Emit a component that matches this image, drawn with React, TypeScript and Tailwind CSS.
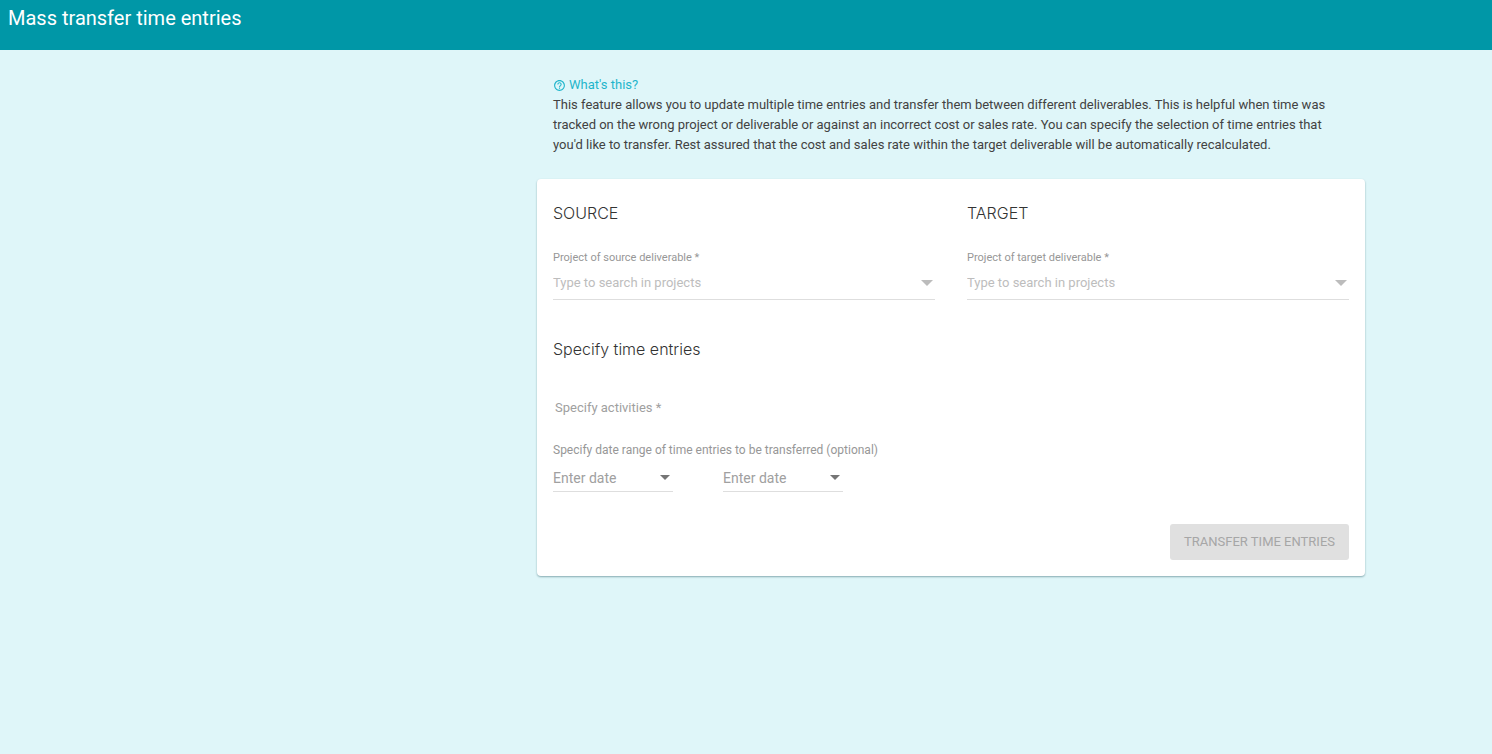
import React, { useState } from 'react';
import { MdHelpOutline } from 'react-icons/md';

interface SearchFieldProps {
  id: string;
  label: string;
}

const Arrow: React.FC<{ className: string }> = ({ className }) => (
  <svg viewBox="0 0 12 6" className={className} fill="currentColor" aria-hidden="true">
    <path d="M0 0h12L6 6z" />
  </svg>
);

const SearchField: React.FC<SearchFieldProps> = ({ id, label }) => {
  const [value, setValue] = useState('');

  return (
    <div className="flex flex-col">
      <label htmlFor={id} className="text-[11px] leading-4 text-[#979797]">
        {label}
      </label>
      <div className="flex h-[34px] items-center border-b border-[#dedede]">
        <input
          id={id}
          value={value}
          onChange={(e) => setValue(e.target.value)}
          placeholder="Type to search in projects"
          className="min-w-0 flex-1 bg-transparent text-[13px] leading-5 outline-none placeholder:text-[#bdbdbd]"
        />
        <button type="button" aria-label={`Open ${label}`} className="px-0.5 text-[#bcbcbc]">
          <Arrow className="h-1.5 w-3" />
        </button>
      </div>
    </div>
  );
};

const DateField: React.FC<{ label: string }> = ({ label }) => {
  const [value, setValue] = useState('');

  return (
    <div className="flex h-7 w-[120px] items-center border-b border-[#dedede]">
      <input
        aria-label={label}
        value={value}
        onChange={(e) => setValue(e.target.value)}
        placeholder="Enter date"
        className="min-w-0 flex-1 bg-transparent text-[14px] leading-5 outline-none placeholder:text-[#a0a0a0]"
      />
      <button type="button" aria-label={`Open ${label}`} className="px-[3px] text-[#757575]">
        <Arrow className="h-[5px] w-2.5" />
      </button>
    </div>
  );
};

const Heading: React.FC<{ children: React.ReactNode }> = ({ children }) => (
  <h2 className="font-['Inter',sans-serif] text-[16px] font-light leading-6 text-[#333]">{children}</h2>
);

export default function App() {
  return (
    <div className="min-h-screen bg-[#dff6f9] font-['Roboto',sans-serif]">
      <header className="h-[50px] bg-[#0097a7] px-2 pt-1">
        <h1 className="text-[20px] leading-7 text-white">Mass transfer time entries</h1>
      </header>

      <main className="px-4 pb-8 pt-[25px] lg:pl-[410px] lg:pr-0">
        <div className="mx-auto max-w-[828px]">
          <div className="px-4 text-[13px] leading-5 text-[#424242]">
            <a href="#help" className="flex items-center gap-[3px] text-[#1fb5cb]">
              <MdHelpOutline size={13} />
              What's this?
            </a>
            <p>
              This feature allows you to update multiple time entries and transfer them between different
              deliverables. This is helpful when time was tracked on the wrong project or deliverable or against an
              incorrect cost or sales rate. You can specify the selection of time entries that you'd like to transfer.
              Rest assured that the cost and sales rate within the target deliverable will be automatically
              recalculated.
            </p>
          </div>

          <form
            onSubmit={(e) => e.preventDefault()}
            className="mt-6 rounded bg-white px-4 pb-4 pt-[22px] shadow-[0_1px_2px_rgba(0,60,70,0.4)]"
          >
            <div className="grid gap-8 sm:grid-cols-2">
              <section className="flex flex-col gap-[25px]">
                <Heading>SOURCE</Heading>
                <SearchField id="source" label="Project of source deliverable *" />
              </section>
              <section className="flex flex-col gap-[25px]">
                <Heading>TARGET</Heading>
                <SearchField id="target" label="Project of target deliverable *" />
              </section>
            </div>

            <section className="mt-[37px]">
              <Heading>Specify time entries</Heading>
              <input
                aria-label="Specify activities"
                placeholder="Specify activities *"
                className="mt-[30px] h-8 w-full bg-transparent px-0.5 text-[13px] leading-5 outline-none placeholder:text-[#a0a0a0]"
              />
              <fieldset className="mt-[19px]">
                <legend className="text-[12px] leading-4 text-[#979797]">
                  Specify date range of time entries to be transferred (optional)
                </legend>
                <div className="mt-1.5 flex gap-[50px]">
                  <DateField label="Start date" />
                  <DateField label="End date" />
                </div>
              </fieldset>
            </section>

            <div className="mt-8 flex justify-end">
              <button
                type="submit"
                disabled
                className="h-9 rounded-[3px] bg-[#e0e0e0] px-3.5 text-[13px] leading-5 text-[#a6a6a6]"
              >
                TRANSFER TIME ENTRIES
              </button>
            </div>
          </form>
        </div>
      </main>
    </div>
  );
}
